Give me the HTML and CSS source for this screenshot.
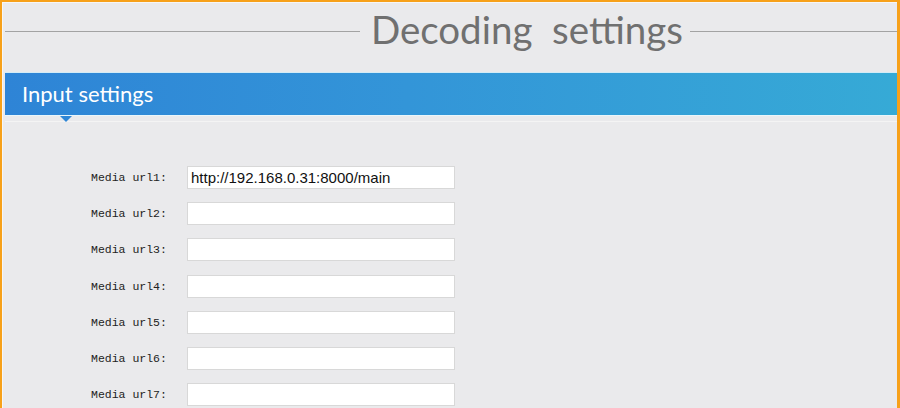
FILE: index.html
```html
<!DOCTYPE html>
<html lang="en">
<head>
    <meta charset="UTF-8">
    <meta name="viewport" content="width=device-width, initial-scale=1.0">
    <title>Decoding settings</title>
    <link rel="stylesheet" href="styles.css">
</head>
<body>
    <div class="frame">
        <div class="page-title">
            <span class="title-line"></span>
            <h1>Decoding&nbsp; settings</h1>
            <span class="title-line title-line-right"></span>
        </div>

        <div class="section-bar">
            <h2>Input settings</h2>
        </div>

        <form class="url-form">
            <div class="form-row">
                <label for="url1">Media url1:</label>
                <input type="text" id="url1" value="http://192.168.0.31:8000/main">
            </div>
            <div class="form-row">
                <label for="url2">Media url2:</label>
                <input type="text" id="url2">
            </div>
            <div class="form-row">
                <label for="url3">Media url3:</label>
                <input type="text" id="url3">
            </div>
            <div class="form-row">
                <label for="url4">Media url4:</label>
                <input type="text" id="url4">
            </div>
            <div class="form-row">
                <label for="url5">Media url5:</label>
                <input type="text" id="url5">
            </div>
            <div class="form-row">
                <label for="url6">Media url6:</label>
                <input type="text" id="url6">
            </div>
            <div class="form-row">
                <label for="url7">Media url7:</label>
                <input type="text" id="url7">
            </div>
        </form>
    </div>
</body>
</html>
```

FILE: styles.css
```css
html, body {
    margin: 0;
    padding: 0;
    height: 100%;
}

body {
    font-family: Lato, 'Open Sans', sans-serif;
    background-color: #eaeaea;
    overflow: hidden;
}

.frame {
    box-sizing: border-box;
    min-height: 100%;
    border-top: 2px solid #f7a11a;
    border-left: 2px solid #f7a11a;
    border-right: 3px solid #f7a11a;
    box-shadow: inset 1px 1px 0 #f6f6f6;
    background-color: #eaeaec;
}

/* heading with a rule on each side */
.page-title {
    display: grid;
    grid-template-columns: 1fr auto 207px;
    align-items: center;
    height: 58px;
    padding: 0 0 0 3px;
}

.title-line {
    height: 1px;
    background-color: #a3a3a3;
}

.page-title h1 {
    margin: 0;
    padding: 0 7px 4px 11px;
    font-weight: 400;
    font-size: 38.5px;
    color: #707070;
}

.section-bar {
    position: relative;
    margin: 12px 0 0 3px;
    height: 42px;
    border-top: 1px solid #d4ecf6;
    border-bottom: 1px solid #e9f6fb;
    background: linear-gradient(to right, #2e84d6, #3395d8 45%, #36aad6);
}

.section-bar::after {
    content: '';
    position: absolute;
    left: 55px;
    bottom: -7px;
    border-left: 6px solid transparent;
    border-right: 6px solid transparent;
    border-top: 6px solid #2f86d6;
}

.section-bar h2 {
    margin: 0;
    padding: 0 0 0 17px;
    line-height: 42px;
    font-weight: 400;
    font-size: 22px;
    color: #ffffff;
}

.url-form {
    margin: 5px 0 0 3px;
    border-top: 1px solid #f4f4f4;
    padding: 44px 0 0 86px;
    display: flex;
    flex-direction: column;
    gap: 13.2px;
}

.form-row {
    display: flex;
    align-items: center;
}

.form-row label {
    width: 96px;
    font-family: 'Liberation Mono', monospace;
    font-size: 11.5px;
    color: #222222;
}

.form-row input {
    box-sizing: border-box;
    width: 268px;
    height: 23px;
    margin: 0;
    padding: 0 4px 0 3px;
    border: 1px solid #d8d8d8;
    background-color: #ffffff;
    font-family: 'Liberation Sans', Arial, sans-serif;
    font-size: 15px;
    color: #111111;
    outline: none;
}
```
